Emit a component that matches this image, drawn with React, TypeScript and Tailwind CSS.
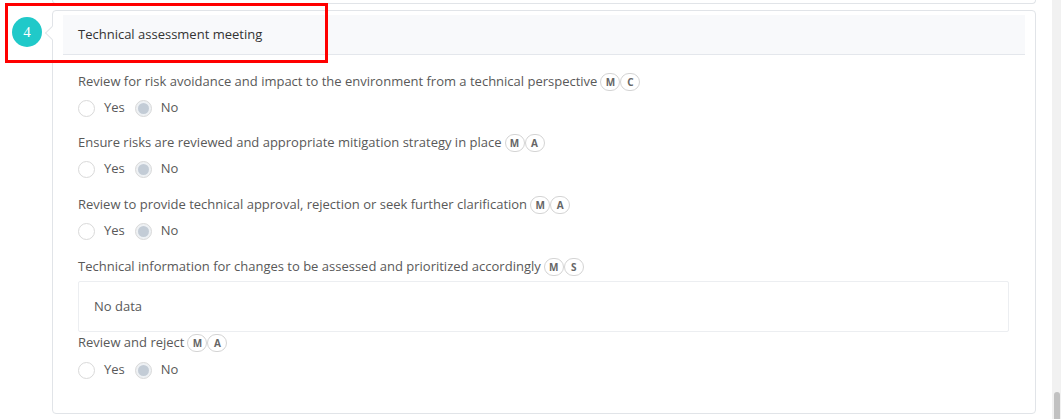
import React from "react";

function Badge({ letter }: { letter: string }) {
  return (
    <span className="inline-flex h-[18px] w-[20px] items-center justify-center rounded-full border border-[#d4d4d4] bg-white text-[10px] font-bold text-[#666] leading-none">
      {letter}
    </span>
  );
}

function Label({ text, badges }: { text: string; badges: string[] }) {
  return (
    <div className="flex h-[20px] items-center text-[13px] text-[#595959]">
      <span>{text}</span>
      <span className="ml-[3px] flex">
        {badges.map((b) => (
          <Badge key={b} letter={b} />
        ))}
      </span>
    </div>
  );
}

function Radio({ checked, label }: { checked?: boolean; label: string }) {
  return (
    <div className="flex items-center mr-[10px]">
      <span
        className={
          "flex h-[17px] w-[17px] items-center justify-center rounded-full border border-[#d9d9d9] " +
          (checked ? "bg-[#eef1f4]" : "bg-white")
        }
      >
        {checked && <span className="h-[11px] w-[11px] rounded-full bg-[#c3ccd6]" />}
      </span>
      <span className="ml-[9px] text-[13px] text-[#595959]">{label}</span>
    </div>
  );
}

function RadioRow() {
  return (
    <div className="mt-[6px] flex h-[20px] items-center">
      <Radio label="Yes" />
      <Radio checked label="No" />
    </div>
  );
}

function Question({ text, badges, mb }: { text: string; badges: string[]; mb: string }) {
  return (
    <div className={mb}>
      <Label text={text} badges={badges} />
      <RadioRow />
    </div>
  );
}

export default function App() {
  return (
    <div className="relative flex h-[419px] w-[1061px] overflow-hidden bg-white font-['Open_Sans',sans-serif]">
      <div className="flex-1">
        <div className="ml-[52px] mr-[16px] h-[4px] rounded-b-[4px] border-x border-b border-[#e1e4e8]" />
        <div className="mt-[6px] flex items-start pl-[12px]">
          <div className="mt-[7px] flex h-[30px] w-[30px] shrink-0 items-center justify-center rounded-full bg-[#20c9c9] font-['Liberation_Serif',serif] text-[15px] text-white">
            4
          </div>
          <div className="relative ml-[10px] mr-[16px] flex-1 rounded-[4px] border border-[#e1e4e8] bg-white px-[10px] pt-[4px] pb-[33px]">
            <div className="absolute left-[-6px] top-[17px] h-[10px] w-[10px] rotate-45 border-b border-l border-[#e1e4e8] bg-white" />
            <div className="flex h-[40px] items-center border-b border-[#e4e7ec] bg-[#f8f9fb] pl-[15px] text-[13px] text-[#333]">
              Technical assessment meeting
            </div>
            <div className="pl-[15px] pr-[16px] pt-[17px]">
              <Question
                mb="mb-[15px]"
                text="Review for risk avoidance and impact to the environment from a technical perspective"
                badges={["M", "C"]}
              />
              <Question
                mb="mb-[16px]"
                text="Ensure risks are reviewed and appropriate mitigation strategy in place"
                badges={["M", "A"]}
              />
              <Question
                mb="mb-[16px]"
                text="Review to provide technical approval, rejection or seek further clarification"
                badges={["M", "A"]}
              />
              <Label
                text="Technical information for changes to be assessed and prioritized accordingly"
                badges={["M", "S"]}
              />
              <div className="mt-[4px] flex h-[51px] items-center rounded-[2px] border border-[#eceef1] pl-[15px] text-[13px] text-[#595959]">
                No data
              </div>
              <div className="mt-[1px]">
                <Label text="Review and reject" badges={["M", "A"]} />
                <div className="mt-[7px] flex h-[20px] items-center">
                  <Radio label="Yes" />
                  <Radio checked label="No" />
                </div>
              </div>
            </div>
          </div>
        </div>
      </div>
      <div className="flex w-[9px] flex-col bg-[#f1f1f1]">
        <div className="ml-[2px] mt-[392px] h-[40px] w-[6px] rounded-t-[3px] bg-[#c1c1c1]" />
      </div>
      <div className="pointer-events-none absolute left-[5px] top-[3px] h-[60px] w-[323px] border-[3px] border-[#ff0000]" />
    </div>
  );
}
